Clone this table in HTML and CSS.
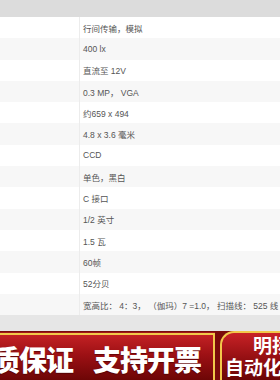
FILE: index.html
```html
<!DOCTYPE html>
<html lang="zh">
<head>
<meta charset="utf-8">
<link rel="stylesheet" href="styles.css">
</head>
<body>
<div class="page">
  <div class="head"></div>
  <div class="table">
    <div class="row"><div class="k"></div><div class="v">行间传输，模拟</div></div>
    <div class="row alt"><div class="k"></div><div class="v">400 lx</div></div>
    <div class="row"><div class="k"></div><div class="v">直流至 12V</div></div>
    <div class="row alt"><div class="k"></div><div class="v">0.3 MP， VGA</div></div>
    <div class="row"><div class="k"></div><div class="v">约659 x 494</div></div>
    <div class="row alt"><div class="k"></div><div class="v">4.8 x 3.6 毫米</div></div>
    <div class="row"><div class="k"></div><div class="v">CCD</div></div>
    <div class="row alt"><div class="k"></div><div class="v">单色，黑白</div></div>
    <div class="row"><div class="k"></div><div class="v">C 接口</div></div>
    <div class="row alt"><div class="k"></div><div class="v">1/2 英寸</div></div>
    <div class="row"><div class="k"></div><div class="v">1.5 瓦</div></div>
    <div class="row alt"><div class="k"></div><div class="v">60帧</div></div>
    <div class="row"><div class="k"></div><div class="v">52分贝</div></div>
    <div class="row alt"><div class="k"></div><div class="v">宽高比： 4：3， （伽玛）7 =1.0， 扫描线： 525 线</div></div>
  </div>
  <div class="gap"></div>
  <div class="banner">
    <div class="promo">
      <span class="seg">品质保证</span><span class="seg second">支持开票</span>
    </div>
    <div class="brand">
      <div class="b1">明扬</div>
      <div class="b2">自动化设备</div>
    </div>
  </div>
</div>
</body>
</html>
```
FILE: styles.css
```css
html, body {
  margin: 0;
  padding: 0;
}
body {
  width: 280px;
  height: 380px;
  overflow: hidden;
  background: #e8e8e8;
  font-family: "Liberation Sans", "Noto Sans CJK SC", sans-serif;
}
.page {
  display: flex;
  flex-direction: column;
  width: 280px;
  height: 380px;
}
.head {
  height: 17px;
  background: #dcdcdc;
  flex: none;
}
.table {
  display: flex;
  flex-direction: column;
  background: #fff;
  flex: none;
}
.row {
  display: flex;
  height: 21.3px;
  background: #ffffff;
}
.row.alt {
  background: #f7f7f7;
}
.k {
  width: 79px;
  flex: none;
  border-right: 1px solid #ececec;
}
.v {
  flex: 1;
  display: flex;
  align-items: center;
  padding-left: 3px;
  font-size: 8.5px;
  color: #555;
  white-space: nowrap;
  overflow: hidden;
}
.gap {
  height: 16px;
  flex: none;
  background: #e6e6e6;
}
.banner {
  flex: 1;
  display: flex;
  align-items: stretch;
  background: #7a0b0b;
  overflow: hidden;
}
.promo {
  width: 215px;
  flex: none;
  display: flex;
  justify-content: flex-end;
  align-items: center;
  padding-right: 12px;
  padding-top: 3px;
  box-sizing: border-box;
  margin-top: 2px;
  border-top: 2px solid #f2c84a;
  border-right: 2px solid #f2c84a;
  box-shadow: 0 -1px 0 #a3161a;
  background: linear-gradient(#c32124, #9c1014 45%, #6d0606);
  overflow: hidden;
  white-space: nowrap;
  font-family: "Noto Sans CJK SC", sans-serif;
  font-weight: 900;
  font-size: 28px;
  letter-spacing: -1px;
  color: #fff;
  text-shadow: 0 1px 1px rgba(60,0,0,0.6);
}
.seg.second {
  margin-left: 20px;
}
.brand {
  flex: 1;
  margin-left: 5px;
  border: 2px solid #f2c84a;
  border-right: 0;
  border-bottom: 0;
  border-top-left-radius: 14px;
  background: linear-gradient(#c82226, #8e0d10 60%, #6a0505);
  display: flex;
  flex-direction: column;
  align-items: flex-start;
  overflow: hidden;
  white-space: nowrap;
  font-family: "Noto Sans CJK SC", sans-serif;
  font-weight: 700;
  font-size: 19px;
  line-height: 22px;
  color: #fff;
}
.b1 {
  padding-left: 31px;
  margin-top: 1px;
}
.b2 {
  padding-left: 3px;
}
```
